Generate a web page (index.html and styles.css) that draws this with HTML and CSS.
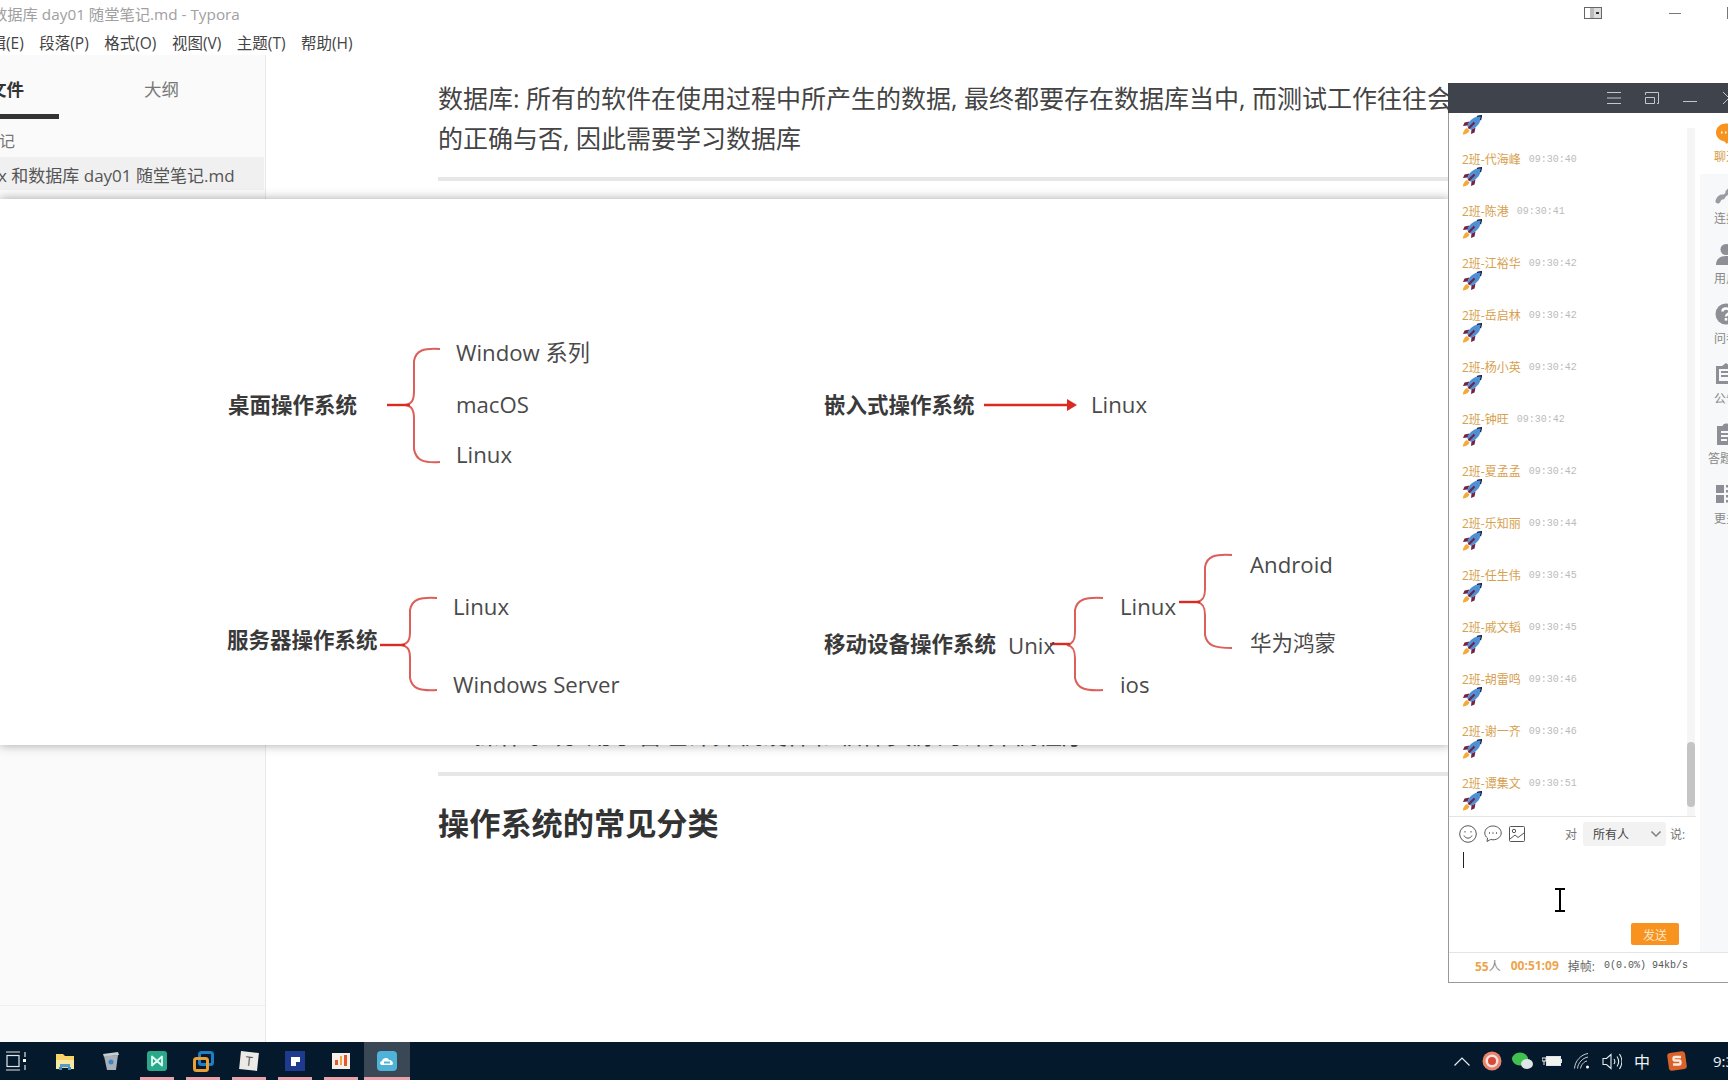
FILE: index.html
```html
<!DOCTYPE html>
<html lang="zh">
<head>
<meta charset="utf-8">
<title>Linux 和数据库 day01 随堂笔记.md - Typora</title>
<link rel="stylesheet" href="styles.css">
</head>
<body>

<svg class="defs" width="0" height="0">
  <symbol id="rocket" viewBox="0 0 20 20">
    <path d="M5 13C2.500 14 1 17 .8 19.500C3.500 19.500 6.500 18 7.500 15.500Z" fill="#f5a93a"/>
    <path d="M7.500 6.500L2.500 7.500L1 11L5.500 10.500Z" fill="#72233f"/>
    <path d="M13.500 12.500L12.500 17.500L9 19L9.500 14.500Z" fill="#72233f"/>
    <path d="M19.500.5C14 1 9.500 3.500 7 7.500L5 11L9 15L12.500 13C16.500 10.500 19 6 19.500.5Z" fill="#4f8fd6"/>
    <path d="M6.500 13.500L12.500 7.500" stroke="#72233f" stroke-width="2.200"/>
    <path d="M15 1.500C17 1 18.500.8 19.500.5C19.300 2 19 3.500 18.500 5" fill="none" stroke="#16203c" stroke-width="1.200"/>
  </symbol>
</svg>

<div class="typora">
  <div class="titlebar">
    <span class="title">数据库 day01 随堂笔记.md - Typora</span>
    <div class="title-controls">
      <svg class="ctl-dock" width="18" height="12" viewBox="0 0 18 12"><rect x=".5" y=".5" width="17" height="11" fill="#fff" stroke="#666"/><rect x="6" y="1" width="4" height="10" fill="#bbb"/><rect x="10" y="1" width="7" height="10" fill="#ddd"/><rect x="12" y="5" width="3" height="2" fill="#333"/></svg>
      <span class="ctl-min"></span>
      <span class="ctl-max"></span>
    </div>
  </div>
  <div class="menubar">
    <span class="menu-first">编辑(E)</span>
    <span>段落(P)</span>
    <span>格式(O)</span>
    <span>视图(V)</span>
    <span>主题(T)</span>
    <span>帮助(H)</span>
  </div>
  <div class="workspace">
    <aside class="sidebar">
      <div class="side-tabs">
        <div class="side-tab active">文件</div>
        <div class="side-tab">大纲</div>
      </div>
      <div class="folder-row"><span class="folder-name">笔记</span></div>
      <div class="file-row"><span class="file-name">Linux 和数据库 day01 随堂笔记.md</span></div>
      <div class="side-foot"></div>
    </aside>
    <main class="editor">
      <p class="para">数据库: 所有的软件在使用过程中所产生的数据, 最终都要存在数据库当中, 而测试工作往往会需要验证数据<br>的正确与否, 因此需要学习数据库</p>
      <hr class="rule">
      <p class="para covered">操作系统: 用于管理计算机硬件和软件资源的计算机程序</p>
      <hr class="rule rule-low">
      <h2 class="heading">操作系统的常见分类</h2>
    </main>
  </div>
</div>

<div class="taskbar">
  <div class="task-apps">
    <div class="task-view">
      <svg width="21" height="20" viewBox="0 0 21 20" fill="none" stroke="#dfe5ea" stroke-width="1.200"><path d="M0 1H14M0 19H14"/><rect x="1" y="4.500" width="12" height="11"/><path d="M19 1V6M19 14V19"/><rect x="17" y="8" width="3" height="3" fill="#fff" stroke="none"/></svg>
    </div>
    <div class="app">
      <svg width="20" height="20" viewBox="0 0 20 20"><path d="M1 3H8L10 5H19V17H1Z" fill="#f6d36b"/><path d="M1 9H19V18H15V13H5V18H1Z" fill="#fbe6a2"/><rect x="5" y="13" width="10" height="3" fill="#4f9bd1"/><rect x="4" y="16" width="3" height="3" fill="#3f8cc4"/><rect x="13" y="16" width="3" height="3" fill="#3f8cc4"/></svg>
    </div>
    <div class="app">
      <svg width="18" height="20" viewBox="0 0 18 20"><path d="M1 3L16 1L17 4L2 6Z" fill="#c9ced3"/><path d="M2 5L16 4L14 19H5Z" fill="#a9b0b7"/><circle cx="9" cy="11" r="2.500" fill="#3b87c9"/></svg>
    </div>
    <div class="app has-line">
      <svg width="20" height="20" viewBox="0 0 20 20"><rect width="20" height="20" rx="3" fill="#2aa98a"/><path d="M5 5.500L10 10L15 5.500V14.500L10 10L5 14.500Z" fill="none" stroke="#dffaf2" stroke-width="1.800" stroke-linejoin="round"/></svg>
    </div>
    <div class="app has-line">
      <svg width="21" height="21" viewBox="0 0 21 21" fill="none" stroke-width="3"><rect x="6.500" y="1.500" width="13" height="12" rx="2" stroke="#1f7fc4"/><rect x="1.500" y="7.500" width="13" height="12" rx="2" stroke="#e8a035"/></svg>
    </div>
    <div class="app has-line">
      <span class="t-icon">T</span>
    </div>
    <div class="app has-line">
      <svg width="20" height="20" viewBox="0 0 20 20"><rect width="20" height="20" fill="#1e3a8f"/><path d="M6 6H15V11H11V15H6Z" fill="#fff"/></svg>
    </div>
    <div class="app has-line">
      <svg width="18" height="16" viewBox="0 0 18 16"><rect width="18" height="16" fill="#f4efe8"/><rect x="3" y="7" width="3" height="5" fill="#e4572e"/><rect x="8" y="3" width="2" height="9" fill="#f2a541"/><rect x="12" y="2" width="3" height="11" fill="#e4572e"/></svg>
    </div>
    <div class="app app-active has-line">
      <svg width="20" height="20" viewBox="0 0 20 20"><rect width="20" height="20" rx="4" fill="#4fb3d9"/><path d="M5 14C2.500 14 2.500 10 5 10C5.500 6.500 11 6 12 9C15.500 8.500 17.500 13.500 14.500 14Z" fill="#fff"/><rect x="7" y="10.500" width="6" height="2" fill="#4fb3d9"/></svg>
    </div>
  </div>
  <div class="tray">
    <div class="tray-slot"><svg width="16" height="9" viewBox="0 0 16 9" fill="none" stroke="#e8edf1" stroke-width="1.200"><path d="M.5 8.500L8 1L15.500 8.500"/></svg></div>
    <div class="tray-slot"><svg width="20" height="20" viewBox="0 0 20 20"><circle cx="10" cy="10" r="9.500" fill="#e9826f"/><circle cx="10" cy="10" r="6.500" fill="#f6e3d8"/><circle cx="10" cy="10" r="4" fill="#d9483b"/></svg></div>
    <div class="tray-slot"><svg width="21" height="18" viewBox="0 0 21 18"><ellipse cx="8" cy="7" rx="8" ry="6.500" fill="#3fc04f"/><ellipse cx="15" cy="12" rx="6" ry="5" fill="#dfe6e8"/></svg></div>
    <div class="tray-slot"><svg width="20" height="12" viewBox="0 0 20 12"><rect x="4.500" y="1.500" width="14" height="9" fill="#f3f3ee" stroke="#dfe5ea"/><rect x="19" y="4" width="1" height="4" fill="#dfe5ea"/><path d="M0 3H4V6H0ZM2 6V10" fill="none" stroke="#f3f3ee"/></svg></div>
    <div class="tray-slot"><svg width="16" height="16" viewBox="0 0 16 16" fill="none" stroke="#c8d0d6"><path d="M.5 15.500C1 8 7 1.500 14 .5M3.500 15.500C4 10 8.500 5 14 4M6.500 15.500C7 12 10 8.500 13 8"/><circle cx="13.500" cy="14" r="1.500" fill="#fff" stroke="none"/></svg></div>
    <div class="tray-slot"><svg width="20" height="17" viewBox="0 0 20 17" fill="none" stroke="#e8edf1" stroke-width="1.100"><path d="M1 5.500H4.500L9 1.500V15.500L4.500 11.500H1Z"/><path d="M12 6C13 7.500 13 9.500 12 11M15 3.500C17 6.500 17 10.500 15 13.500M17.500 1C20.500 5.500 20.500 11.500 17.500 16"/></svg></div>
    <div class="tray-slot tray-text">中</div>
    <div class="tray-slot tray-sogou"><svg width="20" height="20" viewBox="0 0 20 20"><rect x="1" y="1" width="18" height="18" rx="3" transform="rotate(-8 10 10)" fill="#d9622b"/><path d="M14 6H8C6 6 6 9.500 8 9.500H12C14 9.500 14 13.500 12 13.500H6" fill="none" stroke="#fbeadf" stroke-width="2.400"/></svg></div>
    <div class="clock">9:30</div>
  </div>
</div>

<section class="figure-card">
  <svg class="links" width="1450" height="546" viewBox="0 0 1450 546" fill="none">
    <g stroke="#dc5f59" stroke-width="2">
      <path d="M440 150C424 149 416 151 414 162V192C414 201 412 205 405 206C412 207 414 211 414 220V250C416 262 424 264 440 263"/>
      <path d="M437 399C420 398 412 400 410 411V433C410 441 408 445 401 446C408 447 410 451 410 459V479C412 490 420 492 437 491"/>
      <path d="M1103 399C1086 398 1077 400 1075 411V433C1075 441 1073 445 1067 446C1073 447 1075 451 1075 459V479C1077 490 1086 492 1103 491"/>
      <path d="M1232 356C1215 355 1207 357 1205 368V390C1205 398 1203 402 1197 403C1203 404 1205 408 1205 416V436C1207 447 1215 449 1232 449"/>
    </g>
    <g stroke="#d92b22" stroke-width="2.400">
      <path d="M387 206H410"/>
      <path d="M380 446H405"/>
      <path d="M1050 445H1070"/>
      <path d="M1179 403H1200"/>
      <path d="M984 206H1068"/>
    </g>
    <path d="M1067 200L1077 206L1067 212Z" fill="#d92b22"/>
  </svg>
  <span class="node strong n-desktop">桌面操作系统</span>
  <span class="node n-win">Window 系列</span>
  <span class="node n-mac">macOS</span>
  <span class="node n-linux1">Linux</span>
  <span class="node strong n-embed">嵌入式操作系统</span>
  <span class="node n-linux2">Linux</span>
  <span class="node strong n-server">服务器操作系统</span>
  <span class="node n-linux3">Linux</span>
  <span class="node n-winsrv">Windows Server</span>
  <span class="node strong n-mobile">移动设备操作系统</span>
  <span class="node n-unix">Unix</span>
  <span class="node n-linux4">Linux</span>
  <span class="node n-ios">ios</span>
  <span class="node n-android">Android</span>
  <span class="node n-harmony">华为鸿蒙</span>
</section>

<section class="chat">
  <header class="chat-head">
    <svg width="14" height="12" viewBox="0 0 14 12" stroke="#c3c6cb"><path d="M0 .5H14M0 6H14M0 11.500H14"/></svg>
    <svg class="head-win" width="14" height="12" viewBox="0 0 14 12" fill="none" stroke="#c3c6cb"><path d="M.5 5.500H9.500V11.500H.5ZM.5 3V.5H13.500V11.500H12"/></svg>
    <span class="head-min"></span>
    <svg class="head-close" width="12" height="12" viewBox="0 0 12 12" stroke="#c3c6cb"><path d="M0 0L12 12M12 0L0 12"/></svg>
  </header>
  <div class="chat-body">
    <div class="chat-main">
      <div class="chat-scroll">
        <div class="msg-list">
          <div class="msg"><svg class="rocket"><use href="#rocket"/></svg></div>
          <div class="msg"><div class="msg-line"><span class="msg-name">2班-代海峰</span><span class="msg-time">09:30:40</span></div><svg class="rocket"><use href="#rocket"/></svg></div>
          <div class="msg"><div class="msg-line"><span class="msg-name">2班-陈港</span><span class="msg-time">09:30:41</span></div><svg class="rocket"><use href="#rocket"/></svg></div>
          <div class="msg"><div class="msg-line"><span class="msg-name">2班-江裕华</span><span class="msg-time">09:30:42</span></div><svg class="rocket"><use href="#rocket"/></svg></div>
          <div class="msg"><div class="msg-line"><span class="msg-name">2班-岳启林</span><span class="msg-time">09:30:42</span></div><svg class="rocket"><use href="#rocket"/></svg></div>
          <div class="msg"><div class="msg-line"><span class="msg-name">2班-杨小英</span><span class="msg-time">09:30:42</span></div><svg class="rocket"><use href="#rocket"/></svg></div>
          <div class="msg"><div class="msg-line"><span class="msg-name">2班-钟旺</span><span class="msg-time">09:30:42</span></div><svg class="rocket"><use href="#rocket"/></svg></div>
          <div class="msg"><div class="msg-line"><span class="msg-name">2班-夏孟孟</span><span class="msg-time">09:30:42</span></div><svg class="rocket"><use href="#rocket"/></svg></div>
          <div class="msg"><div class="msg-line"><span class="msg-name">2班-乐知丽</span><span class="msg-time">09:30:44</span></div><svg class="rocket"><use href="#rocket"/></svg></div>
          <div class="msg"><div class="msg-line"><span class="msg-name">2班-任生伟</span><span class="msg-time">09:30:45</span></div><svg class="rocket"><use href="#rocket"/></svg></div>
          <div class="msg"><div class="msg-line"><span class="msg-name">2班-戚文韬</span><span class="msg-time">09:30:45</span></div><svg class="rocket"><use href="#rocket"/></svg></div>
          <div class="msg"><div class="msg-line"><span class="msg-name">2班-胡雷鸣</span><span class="msg-time">09:30:46</span></div><svg class="rocket"><use href="#rocket"/></svg></div>
          <div class="msg"><div class="msg-line"><span class="msg-name">2班-谢一齐</span><span class="msg-time">09:30:46</span></div><svg class="rocket"><use href="#rocket"/></svg></div>
          <div class="msg"><div class="msg-line"><span class="msg-name">2班-谭集文</span><span class="msg-time">09:30:51</span></div><svg class="rocket"><use href="#rocket"/></svg></div>
        </div>
        <div class="scroll-track"><div class="scroll-thumb"></div></div>
      </div>
      <div class="chat-tools">
        <svg width="18" height="18" viewBox="0 0 18 18" fill="none" stroke="#555"><circle cx="9" cy="9" r="8.300"/><path d="M5 10.500C6.500 14 11.500 14 13 10.500"/><path d="M6 6V7.500M12 6V7.500"/></svg>
        <svg width="18" height="18" viewBox="0 0 18 18" fill="none" stroke="#555"><path d="M9 1C4.500 1 .8 4 .8 8C.8 10 1.800 11.800 3.500 13L3 16.500L6.500 14.500C7.300 14.700 8.100 14.800 9 14.800C13.500 14.800 17.200 11.800 17.200 8C17.200 4 13.500 1 9 1Z"/><path d="M5 8H6M8.500 8H9.500M12 8H13" stroke-width="1.500"/></svg>
        <svg width="16" height="16" viewBox="0 0 16 16" fill="none" stroke="#555"><rect x=".5" y=".5" width="15" height="15" rx="1"/><circle cx="5" cy="5" r="1.700"/><path d="M1 13L6 9L9 11.500L15 7"/></svg>
        <span class="to-label">对</span>
        <div class="to-select"><span>所有人</span><svg width="10" height="6" viewBox="0 0 10 6" fill="none" stroke="#888" stroke-width="1.600"><path d="M.5.5L5 5L9.500.5"/></svg></div>
        <span class="say-label">说:</span>
      </div>
      <div class="chat-input">
        <span class="caret"></span>
        <button class="send">发送</button>
      </div>
    </div>
    <nav class="rail">
      <div class="rail-item on">
        <svg width="24" height="24" viewBox="0 0 24 24"><path d="M12 2.500C6 2.500 2 6.500 2 11.500C2 16 5.500 19.500 10 20.300L13 23L14.500 20.300C19 19.500 22 16 22 11.500C22 6.500 18 2.500 12 2.500Z" fill="#f7931e"/><path d="M7 11.500H8.500M11 11.500H12.500M15 11.500H16.500" stroke="#fff" stroke-width="1.800"/></svg>
        <span>聊天</span>
      </div>
      <div class="rail-item">
        <svg width="24" height="24" viewBox="0 0 24 24" fill="none" stroke="#9a9ca3" stroke-width="5" stroke-linecap="round"><path d="M4 19C5 16 6.500 15 8.500 15"/><path d="M14 10L20 4"/><path d="M9 15L15 10" stroke-width="3"/></svg>
        <span>连接</span>
      </div>
      <div class="rail-item">
        <svg width="24" height="24" viewBox="0 0 24 24" fill="#8d8f97"><circle cx="12" cy="7.500" r="5.500"/><path d="M2 23C2 17 6 14 12 14C18 14 22 17 22 23Z"/></svg>
        <span>用户</span>
      </div>
      <div class="rail-item">
        <svg width="24" height="24" viewBox="0 0 24 24"><circle cx="12" cy="12" r="10.500" fill="#8d8f97"/><path d="M8.500 9.500C8.500 5.500 15.500 5.500 15.500 9.500C15.500 12 12 12 12 14.500" fill="none" stroke="#fff" stroke-width="2.400"/><rect x="10.700" y="16" width="2.600" height="2.600" fill="#fff"/></svg>
        <span>问卷</span>
      </div>
      <div class="rail-item">
        <svg width="24" height="24" viewBox="0 0 24 24"><path d="M2 4H8L12 1L16 4H22V22H2Z" fill="#8d8f97"/><rect x="5" y="7" width="14" height="12" fill="#f6f8fa"/><rect x="7" y="9" width="10" height="2" fill="#8d8f97"/><rect x="7" y="13" width="10" height="2" fill="#8d8f97"/></svg>
        <span>公告</span>
      </div>
      <div class="rail-item">
        <svg width="24" height="24" viewBox="0 0 24 24"><path d="M3 4H8.500C9 .5 15 .5 15.500 4H21V23H3Z" fill="#8d8f97"/><path d="M7 10H17M7 14H17M7 18H13" stroke="#f6f8fa" stroke-width="1.800"/></svg>
        <span>答题卡</span>
      </div>
      <div class="rail-item">
        <svg width="24" height="24" viewBox="0 0 24 24" fill="#8d8f97"><rect x="2" y="3" width="8" height="8"/><rect x="2" y="13" width="8" height="8"/><rect x="12" y="3" width="10" height="2.500"/><rect x="12" y="8" width="10" height="2.500"/><rect x="12" y="13" width="10" height="2.500"/><rect x="12" y="18" width="10" height="2.500"/></svg>
        <span>更多</span>
      </div>
    </nav>
  </div>
  <footer class="chat-status">
    <span class="stat-num">55<span class="stat-unit">人</span></span>
    <span class="stat-num stat-timer">00:51:09</span>
    <span class="stat-drop">掉帧:</span>
    <span class="stat-mono">0(0.0%) 94kb/s</span>
  </footer>
</section>

<svg class="ibeam" width="12" height="24" viewBox="0 0 12 24" fill="none" stroke="#000" stroke-width="2"><path d="M1 1H11M1 23H11M6 1V23"/></svg>

</body>
</html>
```

FILE: styles.css
```css
html, body {
  margin: 0;
  height: 100%;
}
body {
  width: 1728px;
  height: 1080px;
  overflow: hidden;
  position: relative;
  display: flex;
  flex-direction: column;
  background: #fff;
  color: #333;
  font-family: "Open Sans", "Noto Sans CJK SC", sans-serif;
}
.defs {
  position: absolute;
}

/* typora window */
.typora {
  flex: 1;
  display: flex;
  flex-direction: column;
  min-height: 0;
}
.titlebar {
  height: 26px;
  flex: none;
  display: flex;
  justify-content: space-between;
  align-items: center;
}
.title {
  margin-left: -8px;
  font-size: 15.300px;
  color: #a0a0a0;
}
.title-controls {
  display: flex;
  align-items: center;
}
.ctl-min {
  width: 12px;
  height: 1px;
  margin-left: 67px;
  background: #777;
}
.ctl-max {
  width: 10px;
  height: 10px;
  margin-left: 46px;
  margin-right: -11px;
  border: 1px solid #777;
}
.menubar {
  height: 29px;
  box-sizing: border-box;
  padding-top: 3px;
  flex: none;
  display: flex;
  align-items: center;
  gap: 15.500px;
  font-size: 15.500px;
  color: #444;
}
.menu-first {
  margin-left: -25px;
}
.workspace {
  flex: 1;
  display: flex;
  min-height: 0;
}
.sidebar {
  width: 266px;
  flex: none;
  display: flex;
  flex-direction: column;
  box-sizing: border-box;
  background: #fafafa;
  border-right: 1px solid #e8e8e8;
}
.side-tabs {
  height: 64px;
  flex: none;
  display: flex;
  gap: 50px;
  margin-left: -46px;
}
.side-tab {
  width: 105px;
  height: 64px;
  box-sizing: border-box;
  padding-top: 22px;
  line-height: 24px;
  text-align: center;
  font-size: 17.500px;
  color: #777;
}
.side-tab.active {
  color: #333;
  font-weight: 700;
  border-bottom: 5px solid #333;
}
.folder-row {
  height: 38px;
  box-sizing: border-box;
  padding-top: 4px;
  flex: none;
  display: flex;
  align-items: center;
  font-size: 16px;
  color: #777;
}
.folder-name {
  margin-left: -17px;
}
.file-row {
  height: 33px;
  box-sizing: border-box;
  padding-top: 2px;
  flex: none;
  display: flex;
  align-items: center;
  background: #f0f0f0;
  margin-right: 1px;
  font-size: 17px;
  color: #555;
  white-space: nowrap;
}
.file-name {
  margin-left: -36px;
}
.side-foot {
  margin-top: auto;
  height: 36px;
  border-top: 1px solid #eee;
}
.editor {
  flex: 1;
  padding: 23px 0 0 172px;
  min-width: 0;
}
.para {
  margin: 0;
  font-size: 25px;
  line-height: 40px;
  color: #444;
  white-space: nowrap;
}
.rule {
  height: 4px;
  margin: 19px 0 0;
  border: none;
  background: #e7e7e7;
}
.covered {
  margin-top: 533px;
  padding-left: 36px;
}
.rule.rule-low {
  margin-top: 18px;
}
.heading {
  margin: 27px 0 0;
  font-size: 31.200px;
  font-weight: 700;
  line-height: 40px;
  color: #333;
}

/* picture pasted over the notes */
.figure-card {
  position: absolute;
  left: 0;
  top: 199px;
  width: 1450px;
  height: 546px;
  background: #fff;
  box-shadow: 0 0 10px rgba(0, 0, 0, 0.35);
}
.links {
  position: absolute;
  left: 0;
  top: 0;
}
.node {
  position: absolute;
  line-height: 30px;
  font-size: 22.200px;
  color: #4a4a4a;
  white-space: nowrap;
}
.strong {
  font-size: 21.500px;
  font-weight: 700;
  color: #3a3a3a;
}
.n-desktop { left: 228px; top: 191px; }
.n-win { left: 456px; top: 139px; }
.n-mac { left: 456px; top: 191px; }
.n-linux1 { left: 456px; top: 241px; }
.n-embed { left: 824px; top: 191px; }
.n-linux2 { left: 1091px; top: 191px; }
.n-server { left: 227px; top: 426px; }
.n-linux3 { left: 453px; top: 393px; }
.n-winsrv { left: 453px; top: 471px; }
.n-mobile { left: 824px; top: 430px; }
.n-unix { left: 1008px; top: 432px; }
.n-linux4 { left: 1120px; top: 393px; }
.n-ios { left: 1120px; top: 471px; }
.n-android { left: 1250px; top: 351px; }
.n-harmony { left: 1250px; top: 429px; font-size: 21.500px; }

/* live class chat window */
.chat {
  position: absolute;
  left: 1448px;
  top: 83px;
  width: 304px;
  height: 900px;
  display: flex;
  flex-direction: column;
  box-sizing: border-box;
  background: #fff;
  border-left: 1px solid #999;
  border-bottom: 1px solid #999;
}
.chat-head {
  height: 30px;
  flex: none;
  display: flex;
  align-items: center;
  padding-left: 159px;
  margin-left: -1px;
  background: #3f434c;
}
.head-win {
  margin-left: 24px;
}
.head-min {
  width: 14px;
  height: 1px;
  margin-left: 24px;
  margin-top: 6px;
  background: #c3c6cb;
}
.head-close {
  margin-left: 26px;
  flex: none;
}
.chat-body {
  flex: 1;
  display: flex;
  min-height: 0;
}
.chat-main {
  width: 251px;
  flex: none;
  display: flex;
  flex-direction: column;
}
.chat-scroll {
  height: 704px;
  flex: none;
  display: flex;
  overflow: hidden;
  border-bottom: 1px solid #e4e4e4;
  margin-right: 4px;
  box-sizing: border-box;
}
.msg-list {
  flex: 1;
  padding: 2px 0 0 13px;
}
.msg {
  margin-bottom: 16px;
}
.msg-line {
  display: flex;
  align-items: center;
  height: 16px;
  gap: 8px;
}
.msg-name {
  font-size: 12px;
  color: #d7a04c;
}
.msg-time {
  font-family: "Liberation Mono", monospace;
  font-size: 10px;
  color: #bbb;
}
.rocket {
  display: block;
  width: 20px;
  height: 20px;
}
.scroll-track {
  width: 8px;
  flex: none;
  margin: 15px 1px 0 0;
  display: flex;
  flex-direction: column;
  justify-content: flex-end;
  padding-bottom: 9px;
  background: #f5f5f5;
}
.scroll-thumb {
  height: 65px;
  border-radius: 4px;
  background: #c4c4c4;
}
.chat-tools {
  height: 33px;
  flex: none;
  display: flex;
  align-items: center;
  gap: 7px;
  padding-left: 10px;
  font-size: 12px;
  color: #777;
}
.to-label {
  margin-left: 33px;
  margin-right: -1px;
}
.to-select {
  width: 83px;
  height: 24px;
  box-sizing: border-box;
  padding: 0 5px 0 10px;
  display: flex;
  align-items: center;
  justify-content: space-between;
  border-radius: 3px;
  background: #f2f2f2;
  color: #444;
}
.say-label {
  margin-left: -3px;
}
.chat-input {
  flex: 1;
  position: relative;
  display: flex;
  flex-direction: column;
  justify-content: flex-end;
  align-items: flex-end;
  padding: 0 21px 7px 0;
}
.caret {
  position: absolute;
  left: 14px;
  top: 2px;
  width: 1px;
  height: 16px;
  background: #222;
}
.send {
  width: 48px;
  height: 22px;
  padding: 0;
  border: none;
  border-radius: 2px;
  background: #f7931e;
  color: #fbe6c8;
  font: 12px "Noto Sans CJK SC", sans-serif;
}
.rail {
  flex: 1;
  display: flex;
  flex-direction: column;
  background: #f6f8fa;
}
.rail-item {
  height: 60px;
  flex: none;
  box-sizing: border-box;
  padding-top: 8px;
  display: flex;
  flex-direction: column;
  align-items: center;
  font-size: 12px;
  line-height: 16px;
  color: #888;
  white-space: nowrap;
}
.rail-item span {
  margin-top: 5px;
}
.rail-item.on {
  height: 61px;
  background: #fff;
  color: #d7a04c;
}
.rail-item.on span {
  margin-top: 4px;
}
.chat-status {
  height: 30px;
  flex: none;
  box-sizing: border-box;
  display: flex;
  align-items: center;
  padding: 0 0 4px 26px;
  border-top: 1px solid #e4e4e4;
  font-size: 12px;
  color: #666;
}
.stat-num {
  font-weight: 700;
  color: #eda44c;
}
.stat-unit {
  font-weight: 400;
  color: #888;
}
.stat-timer {
  margin-left: 10px;
}
.stat-drop {
  margin-left: 9px;
}
.stat-mono {
  margin-left: 9px;
  font-family: "Liberation Mono", monospace;
  font-size: 10px;
  color: #555;
}

/* mouse pointer */
.ibeam {
  position: absolute;
  left: 1554px;
  top: 888px;
}

/* windows taskbar */
.taskbar {
  height: 38px;
  flex: none;
  display: flex;
  justify-content: space-between;
  background: #04192b;
}
.task-apps {
  display: flex;
}
.task-view {
  width: 42px;
  box-sizing: border-box;
  padding-left: 6px;
  display: flex;
  align-items: center;
}
.app {
  width: 46px;
  position: relative;
  display: flex;
  align-items: center;
  justify-content: center;
}
.has-line::after {
  content: "";
  position: absolute;
  left: 6px;
  right: 6px;
  bottom: 0;
  height: 3px;
  background: #e8a2a8;
}
.app-active {
  background: #3a4754;
}
.app-active::after {
  left: 0;
  right: 0;
}
.t-icon {
  width: 18px;
  height: 18px;
  text-align: center;
  line-height: 18px;
  font-size: 13px;
  color: #555;
  background: #eceae6;
  transform: rotate(6deg);
}
.tray {
  width: 281px;
  display: flex;
  align-items: center;
  overflow: hidden;
}
.tray-slot {
  width: 30px;
  flex: none;
  display: flex;
  justify-content: center;
  align-items: center;
}
.tray-text {
  font-size: 16px;
  color: #eef2f5;
}
.tray-sogou {
  margin-left: 5px;
}
.clock {
  margin-left: 21px;
  font-size: 15px;
  color: #eef2f5;
  white-space: nowrap;
}
```
